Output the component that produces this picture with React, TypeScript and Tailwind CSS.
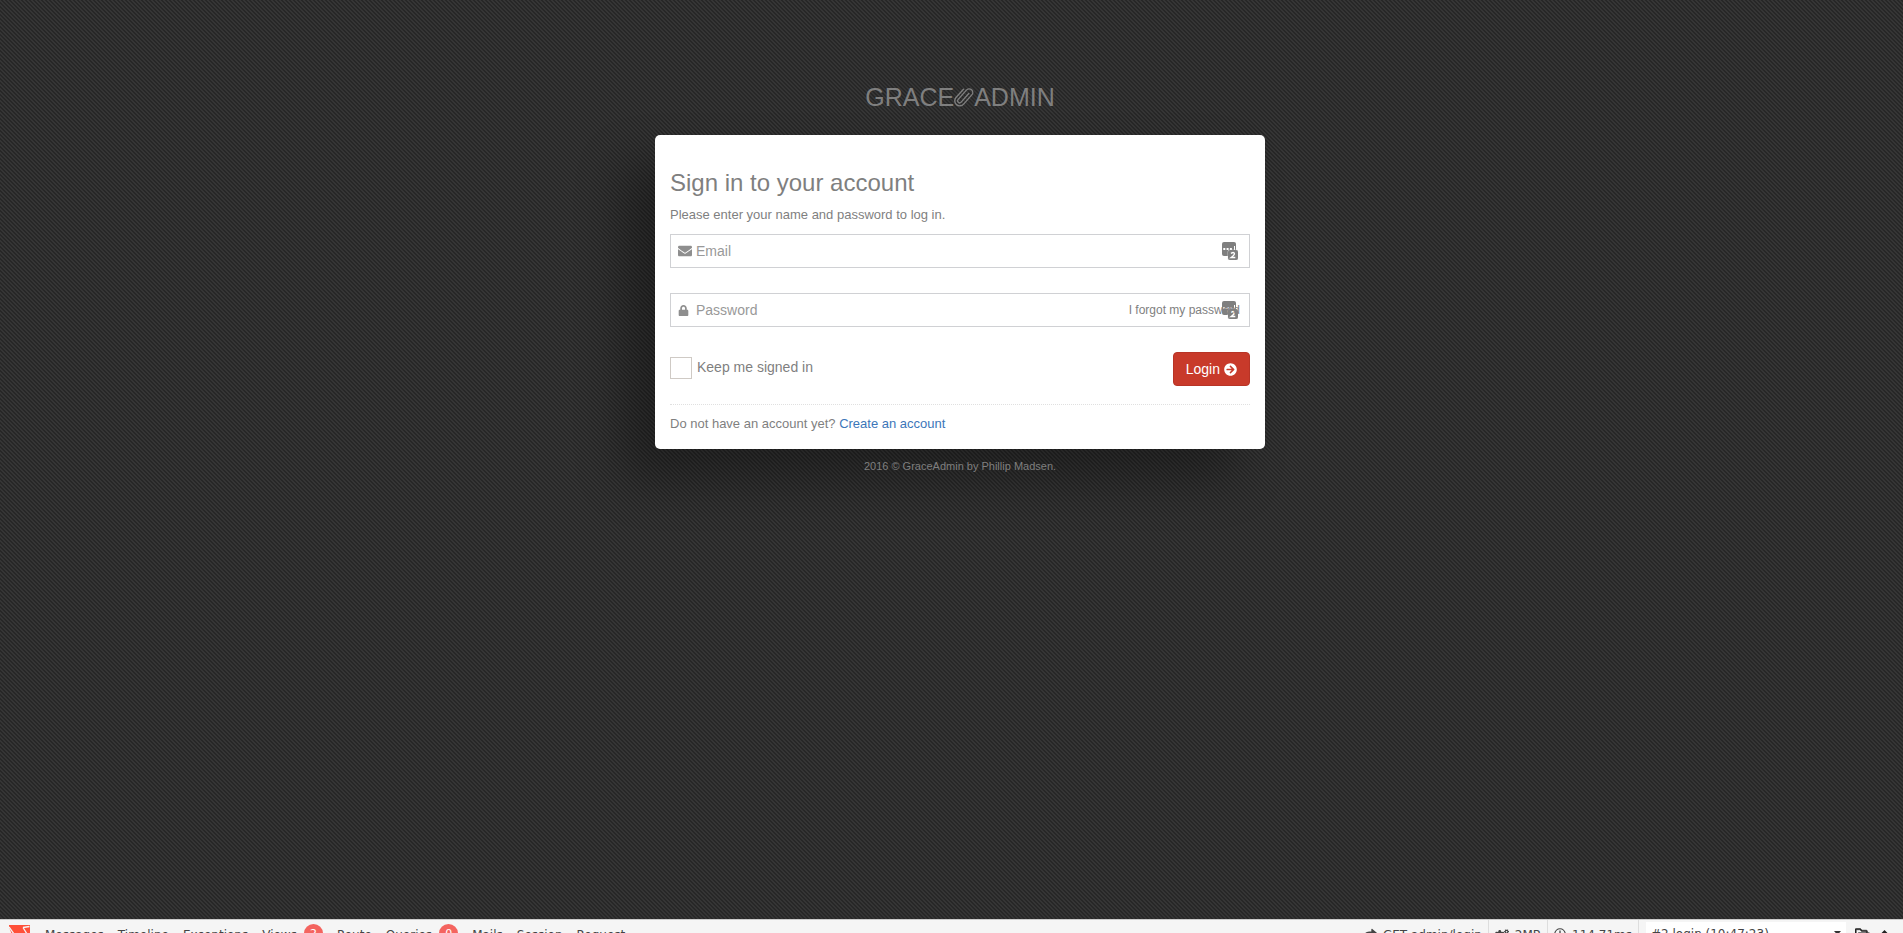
import type { ReactNode } from "react";
import { FaEnvelope, FaLock, FaArrowCircleRight, FaShare, FaCogs, FaRegClock, FaRegFolderOpen } from "react-icons/fa";

function ClipIcon() {
  return (
    <svg viewBox="1 0 20 22" className="h-[22px] w-5" fill="none" stroke="currentColor" strokeWidth="1.4" strokeLinecap="round" aria-hidden="true">
      <path d="M15.800 7.500 8.200 16.100a2 2 0 0 1-3-2.700l8.200-9.300a3.600 3.600 0 0 1 5.400 4.800l-8.200 9.200a5 5 0 0 1-7.600-6.600L10.500 3.200" />
    </svg>
  );
}

function VaultIcon() {
  return (
    <svg viewBox="0 0 16 18" className="h-[18px] w-4" aria-hidden="true">
      <rect width="14" height="14" rx="2" fill="#7f7f7f" />
      <path d="M1.300 6h2v2h-2zM4.600 6h2v2h-2zM7.900 6h2v2h-2zM12 4h1v4h-1z" fill="#fff" />
      <rect x="5.700" y="7.700" width="11" height="11" rx="2" fill="#e4e4e4" />
      <rect x="6" y="8" width="10" height="10" rx="2" fill="#7f7f7f" />
      <path d="M8.900 11.300Q12.400 9.600 12.400 11.800 12.400 13.200 9.200 15.500H13.300" fill="none" stroke="#fff" strokeWidth="1.400" />
    </svg>
  );
}

function Field({ id, type, label, icon, children }: { id: string; type: string; label: string; icon: ReactNode; children?: ReactNode }) {
  return (
    <div className="relative">
      <label htmlFor={id} aria-label={label} className="absolute left-2 top-0 flex h-[34px] items-center text-[#8e8e8e]">
        {icon}
      </label>
      <input
        id={id}
        type={type}
        placeholder={label}
        className="block h-[34px] w-full border border-[#d0d1d4] bg-transparent pl-[25px] pr-3 text-sm text-[#8e8e8e] placeholder:text-[#999999]"
      />
      <span className="absolute right-3 top-2">
        <VaultIcon />
      </span>
      {children}
    </div>
  );
}

function Tab({ children, badge }: { children: ReactNode; badge?: string }) {
  return (
    <a href="#" className="flex h-[26px] items-start gap-[7px] whitespace-nowrap">
      <span className="pt-[7px] leading-4">{children}</span>
      {badge && <span className="mt-1 h-[19px] w-[19px] rounded-full bg-[#f4645f] text-center text-[11px] leading-5 text-white">{badge}</span>}
    </a>
  );
}

function Stat({ icon, children }: { icon: ReactNode; children: ReactNode }) {
  return (
    <span className="flex h-[26px] items-start gap-[6px] whitespace-nowrap border-r border-[#dddddd] px-[6px]">
      <span className="pt-2">{icon}</span>
      <span className="pt-[7px] leading-4">{children}</span>
    </span>
  );
}

export default function App() {
  return (
    <div className="flex h-screen flex-col overflow-hidden bg-[#2d2d2d] bg-[linear-gradient(45deg,#272727_25%,#353535_25%,#353535_50%,#272727_50%,#272727_75%,#353535_75%)] bg-[length:4px_4px] font-['Liberation_Sans',Arial,sans-serif] text-[#7f7f7f]">
      <main className="flex flex-1 flex-col items-center pl-[17px] pt-20">
        <h1 className="flex items-center text-[25px] leading-[34px]">
          GRACE
          <ClipIcon />
          ADMIN
        </h1>
        <section className="mt-[21px] w-full max-w-[610px] rounded-[5px] bg-white px-[15px] pb-[15px] pt-[33px] shadow-[-30px_30px_50px_rgba(0,0,0,0.32)]">
          <h2 className="text-2xl leading-[30px]">Sign in to your account</h2>
          <p className="mt-[7px] text-[13px] leading-5">Please enter your name and password to log in.</p>
          <form className="mt-[9px]" onSubmit={(e) => e.preventDefault()}>
            <Field id="email" type="email" label="Email" icon={<FaEnvelope size={14} />} />
            <div className="mt-[25px]">
              <Field id="password" type="password" label="Password" icon={<FaLock size={11} />}>
                <a href="#" className="absolute right-[10px] top-2 text-xs leading-[18px]">
                  I forgot my password
                </a>
              </Field>
            </div>
            <div className="mt-[25px] flex items-start justify-between border-b border-dotted border-[#e0e0e0] pb-[18px]">
              <label className="flex items-start gap-[5px] pt-[5px] text-sm leading-5">
                <input type="checkbox" className="h-[22px] w-[22px] appearance-none border border-[#cfcac5] bg-white" />
                Keep me signed in
              </label>
              <button type="submit" className="flex h-[34px] items-center gap-1 rounded border border-[#b83426] bg-[#c83a2a] px-3 text-sm text-white">
                Login <FaArrowCircleRight size={13} />
              </button>
            </div>
            <p className="mt-[9px] text-[13px] leading-5">
              Do not have an account yet?{" "}
              <a href="#" className="text-[#3c76b9]">
                Create an account
              </a>
            </p>
          </form>
        </section>
        <p className="mt-2 text-[11px] leading-[18px]">2016 © GraceAdmin by Phillip Madsen.</p>
      </main>
      <footer className="flex h-[14px] items-start overflow-hidden border-t border-[#cccccc] bg-[#f5f5f5] font-['DejaVu_Sans',Verdana,sans-serif] text-xs text-[#444444]">
        <svg viewBox="0 0 21 20" className="ml-[9px] mt-[5px] h-5 w-[21px]" aria-hidden="true">
          <path d="M0 0h21v20H7L0 2z" fill="#ff5039" />
          <path d="M14 2.500 20.500 1.500M14 2.500 18 9M0 2 5 9" stroke="#f5f5f5" strokeWidth="1.300" fill="none" />
        </svg>
        <nav className="ml-[15px] flex gap-[14px]">
          <Tab>Messages</Tab>
          <Tab>Timeline</Tab>
          <Tab>Exceptions</Tab>
          <Tab badge="2">Views</Tab>
          <Tab>Route</Tab>
          <Tab badge="0">Queries</Tab>
          <Tab>Mails</Tab>
          <Tab>Session</Tab>
          <Tab>Request</Tab>
        </nav>
        <div className="ml-auto flex">
          <Stat icon={<FaShare size={13} />}>GET admin/login</Stat>
          <Stat icon={<FaCogs size={14} />}>2MB</Stat>
          <Stat icon={<FaRegClock size={12} />}>114.71ms</Stat>
        </div>
        <div className="relative ml-[7px] mt-0.5">
          <select aria-label="Request" className="block h-6 w-[200px] appearance-none bg-white pl-[5px] text-xs leading-6">
            <option>#2 login (10:47:23)</option>
          </select>
          <svg viewBox="0 0 7 4" className="absolute right-[5px] top-[9px] h-1 w-[7px]" aria-hidden="true">
            <path d="M0 0h7L3.500 4z" fill="#333" />
          </svg>
        </div>
        <button aria-label="Open" className="ml-[9px] mt-[6px] text-[#222222]">
          <FaRegFolderOpen size={15} stroke="currentColor" strokeWidth={20} />
        </button>
        <button aria-label="Minimize" className="ml-[10px] mr-[14px] mt-[10px] text-[#222222]">
          <svg viewBox="0 0 9 6" className="h-1.5 w-[9px]" aria-hidden="true">
            <path d="M4.500 0 9 4.500 7.500 6 4.500 3.500 1.500 6 0 4.500z" fill="currentColor" />
          </svg>
        </button>
      </footer>
    </div>
  );
}
